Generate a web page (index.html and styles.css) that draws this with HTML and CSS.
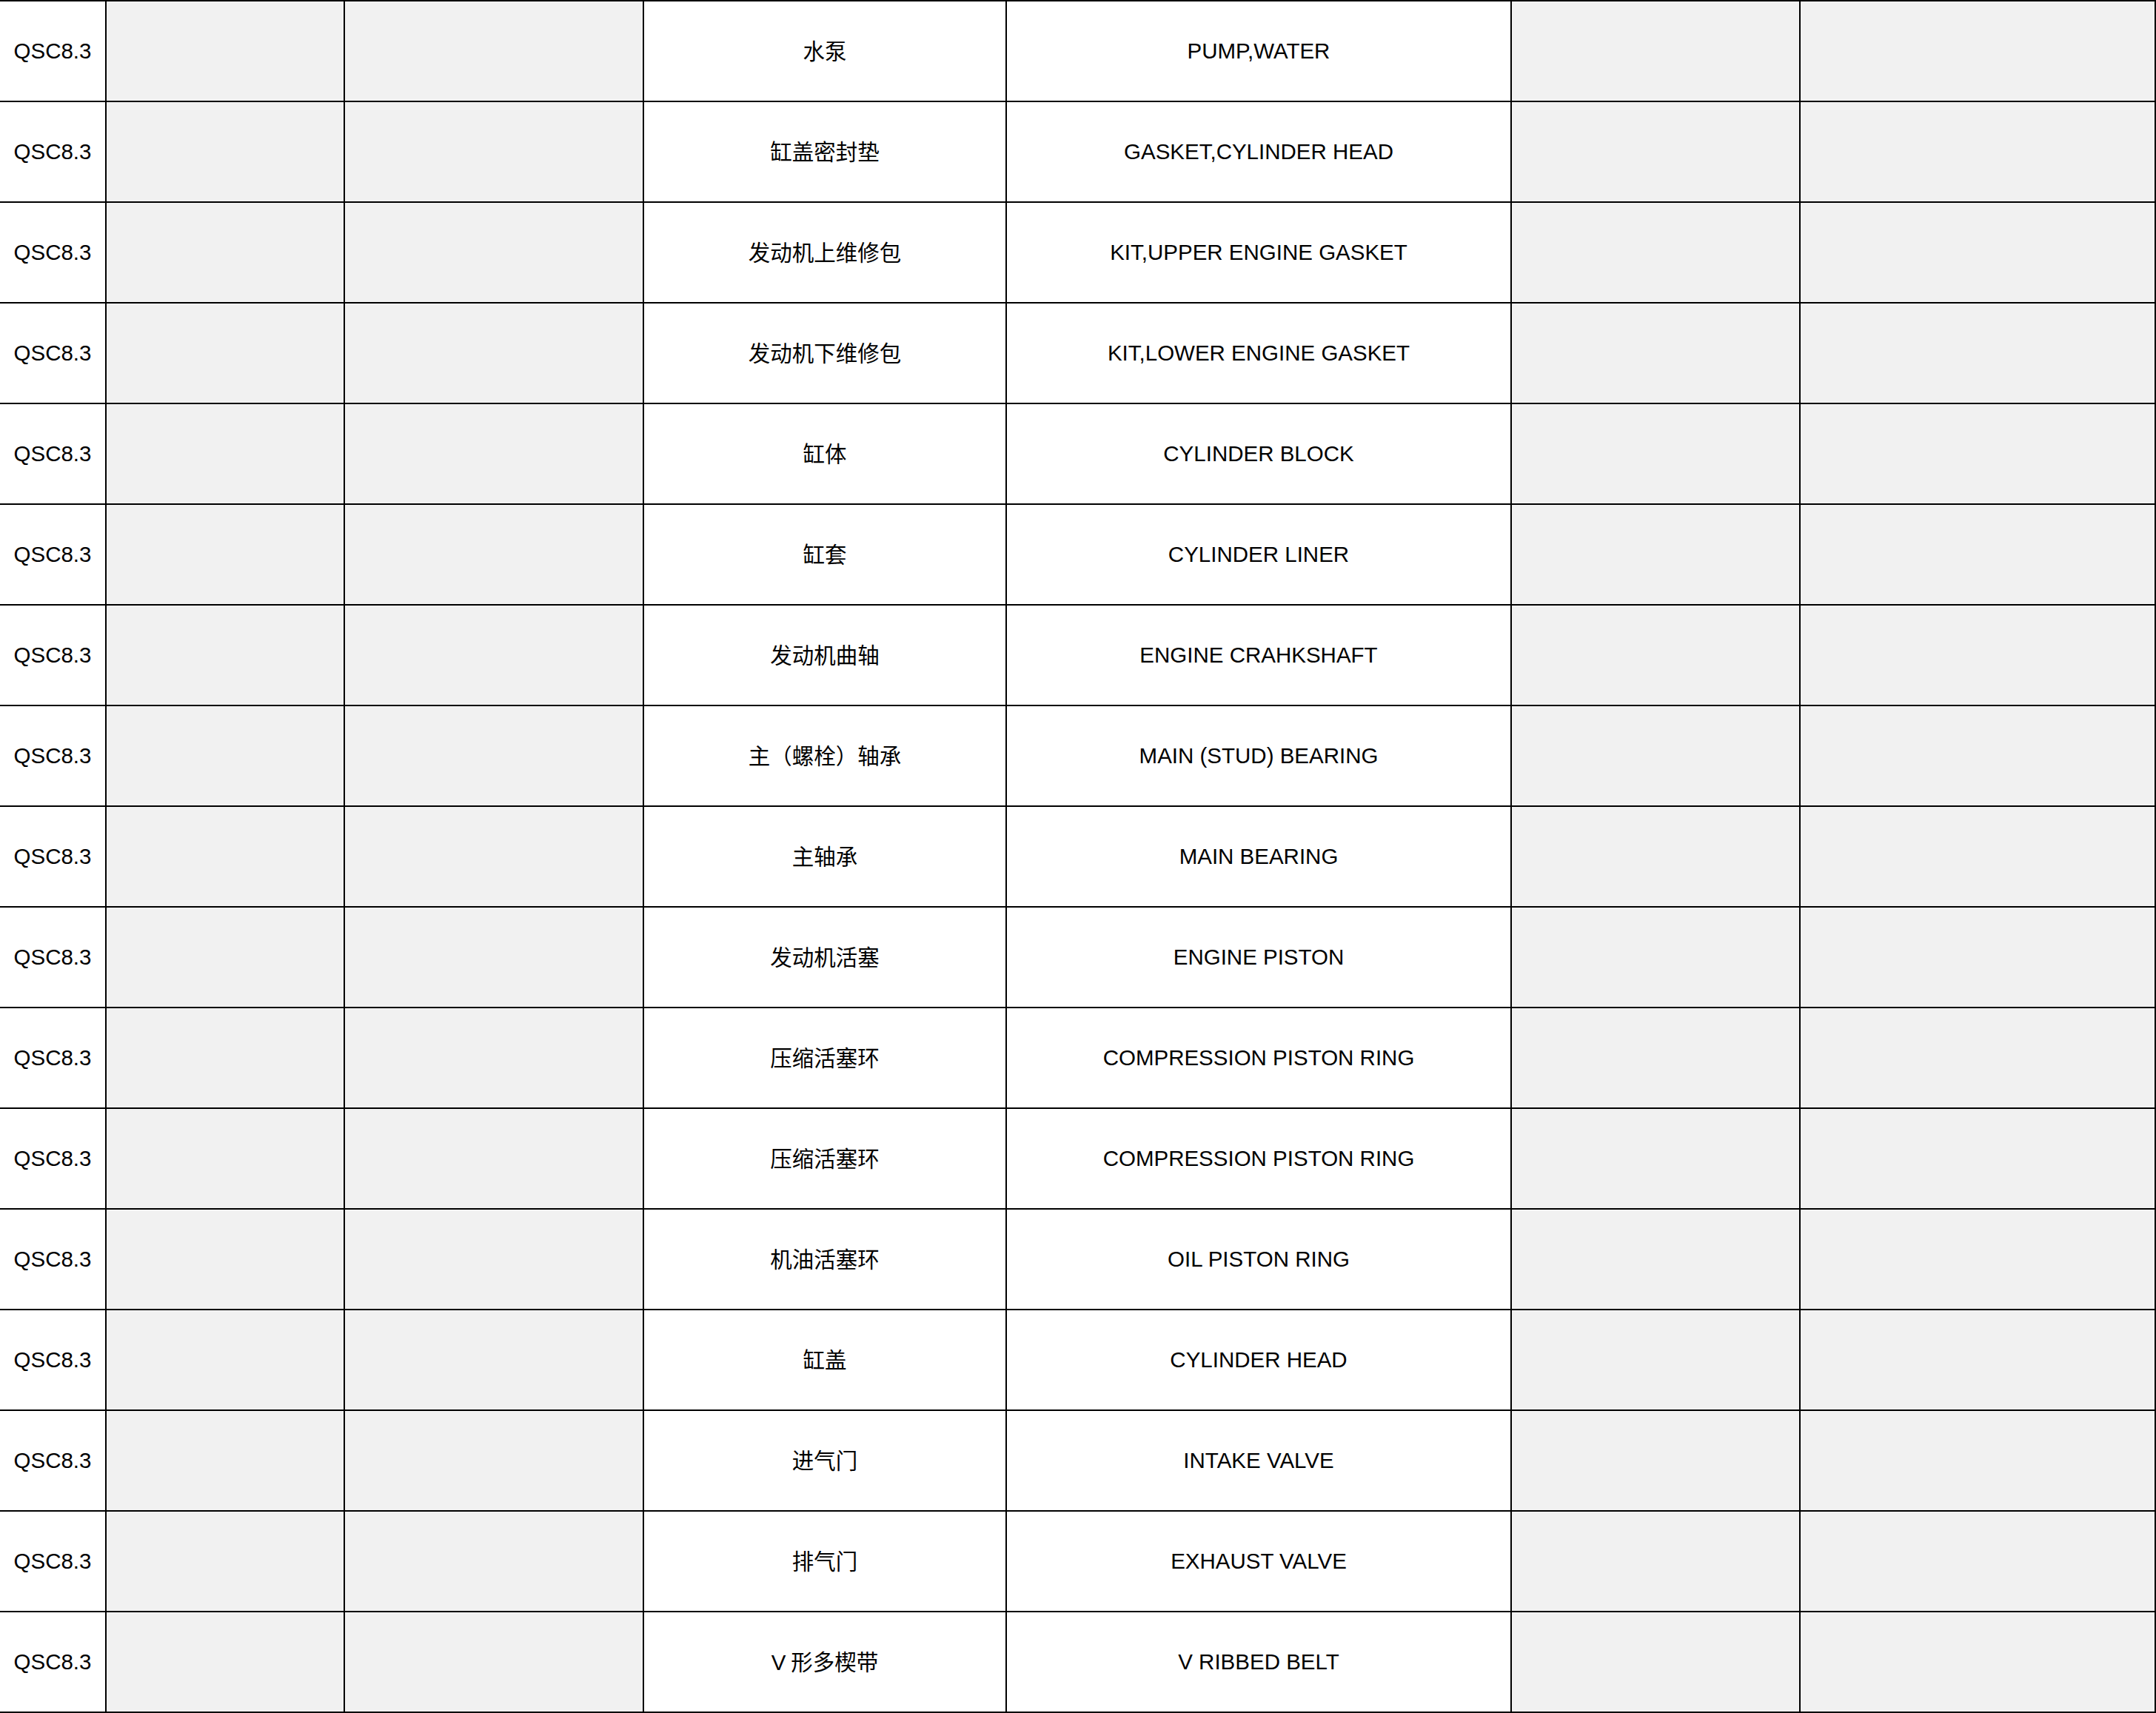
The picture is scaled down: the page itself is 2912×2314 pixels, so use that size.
FILE: index.html
```html
<!DOCTYPE html>
<html lang="zh-CN">
<head>
<meta charset="utf-8">
<title>QSC8.3 parts</title>
<link rel="stylesheet" href="styles.css">
</head>
<body>
<table class="parts">
  <colgroup>
    <col class="c-model"><col class="c-blank1"><col class="c-blank2"><col class="c-cn"><col class="c-en"><col class="c-blank3"><col class="c-blank4">
  </colgroup>
  <tbody>
    <tr><td class="model">QSC8.3</td><td class="empty"></td><td class="empty"></td><td class="cn">水泵</td><td class="en">PUMP,WATER</td><td class="empty"></td><td class="empty"></td></tr>
    <tr><td class="model">QSC8.3</td><td class="empty"></td><td class="empty"></td><td class="cn">缸盖密封垫</td><td class="en">GASKET,CYLINDER HEAD</td><td class="empty"></td><td class="empty"></td></tr>
    <tr><td class="model">QSC8.3</td><td class="empty"></td><td class="empty"></td><td class="cn">发动机上维修包</td><td class="en">KIT,UPPER ENGINE GASKET</td><td class="empty"></td><td class="empty"></td></tr>
    <tr><td class="model">QSC8.3</td><td class="empty"></td><td class="empty"></td><td class="cn">发动机下维修包</td><td class="en">KIT,LOWER ENGINE GASKET</td><td class="empty"></td><td class="empty"></td></tr>
    <tr><td class="model">QSC8.3</td><td class="empty"></td><td class="empty"></td><td class="cn">缸体</td><td class="en">CYLINDER BLOCK</td><td class="empty"></td><td class="empty"></td></tr>
    <tr><td class="model">QSC8.3</td><td class="empty"></td><td class="empty"></td><td class="cn">缸套</td><td class="en">CYLINDER LINER</td><td class="empty"></td><td class="empty"></td></tr>
    <tr><td class="model">QSC8.3</td><td class="empty"></td><td class="empty"></td><td class="cn">发动机曲轴</td><td class="en">ENGINE CRAHKSHAFT</td><td class="empty"></td><td class="empty"></td></tr>
    <tr><td class="model">QSC8.3</td><td class="empty"></td><td class="empty"></td><td class="cn">主（螺栓）轴承</td><td class="en">MAIN (STUD) BEARING</td><td class="empty"></td><td class="empty"></td></tr>
    <tr><td class="model">QSC8.3</td><td class="empty"></td><td class="empty"></td><td class="cn">主轴承</td><td class="en">MAIN BEARING</td><td class="empty"></td><td class="empty"></td></tr>
    <tr><td class="model">QSC8.3</td><td class="empty"></td><td class="empty"></td><td class="cn">发动机活塞</td><td class="en">ENGINE PISTON</td><td class="empty"></td><td class="empty"></td></tr>
    <tr><td class="model">QSC8.3</td><td class="empty"></td><td class="empty"></td><td class="cn">压缩活塞环</td><td class="en">COMPRESSION PISTON RING</td><td class="empty"></td><td class="empty"></td></tr>
    <tr><td class="model">QSC8.3</td><td class="empty"></td><td class="empty"></td><td class="cn">压缩活塞环</td><td class="en">COMPRESSION PISTON RING</td><td class="empty"></td><td class="empty"></td></tr>
    <tr><td class="model">QSC8.3</td><td class="empty"></td><td class="empty"></td><td class="cn">机油活塞环</td><td class="en">OIL PISTON RING</td><td class="empty"></td><td class="empty"></td></tr>
    <tr><td class="model">QSC8.3</td><td class="empty"></td><td class="empty"></td><td class="cn">缸盖</td><td class="en">CYLINDER HEAD</td><td class="empty"></td><td class="empty"></td></tr>
    <tr><td class="model">QSC8.3</td><td class="empty"></td><td class="empty"></td><td class="cn">进气门</td><td class="en">INTAKE VALVE</td><td class="empty"></td><td class="empty"></td></tr>
    <tr><td class="model">QSC8.3</td><td class="empty"></td><td class="empty"></td><td class="cn">排气门</td><td class="en">EXHAUST VALVE</td><td class="empty"></td><td class="empty"></td></tr>
    <tr><td class="model">QSC8.3</td><td class="empty"></td><td class="empty"></td><td class="cn"><span class="lat">V</span> 形多楔带</td><td class="en">V RIBBED BELT</td><td class="empty"></td><td class="empty"></td></tr>
  </tbody>
</table>
</body>
</html>
```
FILE: styles.css
```css
html, body {
  margin: 0;
  padding: 0;
  background: #ffffff;
  overflow: hidden;
}

.parts {
  table-layout: fixed;
  width: 2914px;
  margin-left: -2px;
  border-collapse: separate;
  border-spacing: 2px;
  background: #000000;
  font-family: "Liberation Sans", Arial, "Noto Sans CJK SC", sans-serif;
  font-size: 29.5px;
  color: #000000;
}

.c-model { width: 142px; }
.c-blank1 { width: 320px; }
.c-blank2 { width: 402px; }
.c-cn { width: 488px; }
.c-en { width: 680px; }
.c-blank3 { width: 388px; }
.c-blank4 { width: 478px; }

.parts td {
  height: 134px;
  padding: 0;
  text-align: center;
  vertical-align: middle;
  background: #ffffff;
  white-space: nowrap;
}

.parts td.empty {
  background: #f1f1f1;
}

.parts td.cn {
  font-family: "Noto Sans CJK SC", sans-serif;
  font-size: 29.5px;
  padding-bottom: 4px;
  box-sizing: border-box;
}

.parts td.cn .lat {
  font-family: "Liberation Sans", Arial, sans-serif;
  font-size: 29.5px;
}
```
